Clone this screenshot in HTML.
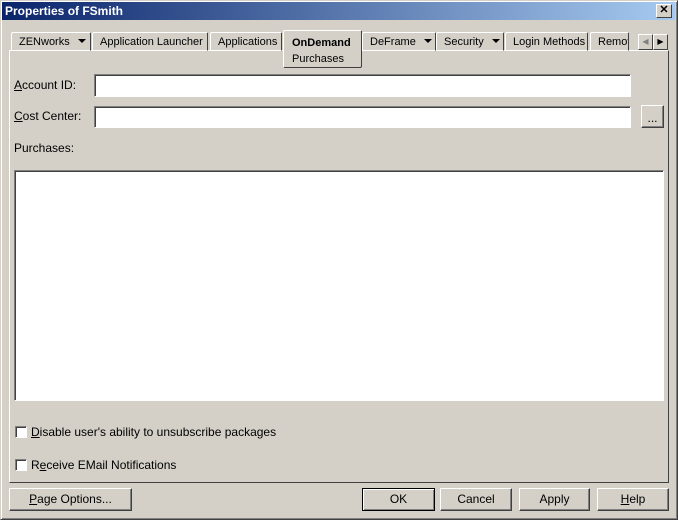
<!DOCTYPE html><html><head><style>
*{margin:0;padding:0;box-sizing:border-box}
body{width:678px;height:520px;background:#d4d0c8;font:12px "Liberation Sans",sans-serif;color:#000;position:relative;overflow:hidden}
.a{position:absolute}
.frame{left:0;top:0;width:678px;height:520px;border:1px solid;border-color:#d4d0c8 #404040 #404040 #d4d0c8;box-shadow:inset 1px 1px 0 #fff,inset -1px -1px 0 #808080}
.title{left:2px;top:2px;width:673px;height:18px;background:linear-gradient(90deg,#0a246a,#a6caf0);color:#fff;font-weight:bold;font-size:12px;padding:2px 0 0 3px}
.x{left:656px;top:4px;width:16px;height:14px;background:#d4d0c8;border:1px solid;border-color:#fff #404040 #404040 #fff;font:bold 11px "Liberation Sans";text-align:center;line-height:11px;color:#000}
.tab{top:32px;height:19px;border:1px solid;border-color:#fff #404040 transparent #fff;border-radius:2px 2px 0 0;padding:3px 0 0 7px;white-space:nowrap;overflow:hidden;font-size:11px}
.tri{display:inline-block;width:0;height:0;border-left:4px solid transparent;border-right:4px solid transparent;border-top:4px solid #000;margin-left:8px;vertical-align:2px}
.panel{left:9px;top:50px;width:660px;height:433px;border:1px solid;border-color:#fff #404040 #404040 #fff}
.inp{background:#fff;border:1px solid;border-color:#808080 #fff #fff #808080;box-shadow:inset 1px 1px 0 #404040}
.btn{border:1px solid;border-color:#fff #404040 #404040 #fff;box-shadow:inset -1px -1px 0 #808080;text-align:center;line-height:21px;font-size:12px}
.cb{width:12px;height:12px;background:#fff;border:1px solid;border-color:#808080 #fff #fff #808080;box-shadow:inset 1px 1px 0 #404040}
u{text-decoration:underline}
</style></head><body>
<div class="a frame"></div>
<div class="a title">Properties of FSmith</div>
<div class="a x">✕</div>
<div class="a panel"></div>
<div class="a tab" style="left:11px;width:80px">ZENworks<span class="tri"></span></div>
<div class="a tab" style="left:92px;width:116px">Application Launcher</div>
<div class="a tab" style="left:210px;width:72px">Applications</div>
<div class="a tab" style="left:362px;width:74px">DeFrame<span class="tri"></span></div>
<div class="a tab" style="left:436px;width:68px">Security<span class="tri"></span></div>
<div class="a tab" style="left:505px;width:83px">Login Methods</div>
<div class="a tab" style="left:590px;width:39px">Remote</div>
<div class="a" style="left:283px;top:30px;width:79px;height:38px;background:#d4d0c8;border:1px solid;border-color:#fff #404040 #404040 #fff;border-radius:2px;padding:4px 0 0 8px;font-size:11px;line-height:16px"><b>OnDemand</b><br>Purchases</div>
<div class="a" style="left:638px;top:34px;width:15px;height:16px;border:1px solid;border-color:#fff #404040 #404040 #fff;font-size:8px;color:#808080;text-align:center;line-height:14px">◀</div>
<div class="a" style="left:653px;top:34px;width:15px;height:16px;border:1px solid;border-color:#fff #404040 #404040 #fff;font-size:8px;text-align:center;line-height:14px">▶</div>
<div class="a" style="left:14px;top:78px"><u>A</u>ccount ID:</div>
<div class="a inp" style="left:94px;top:74px;width:537px;height:23px"></div>
<div class="a" style="left:14px;top:109px"><u>C</u>ost Center:</div>
<div class="a inp" style="left:94px;top:106px;width:537px;height:22px"></div>
<div class="a btn" style="left:641px;top:105px;width:23px;height:23px;line-height:24px">...</div>
<div class="a" style="left:14px;top:141px">Purchases:</div>
<div class="a inp" style="left:14px;top:170px;width:650px;height:231px"></div>
<div class="a cb" style="left:15px;top:426px"></div>
<div class="a" style="left:31px;top:425px"><u>D</u>isable user's ability to unsubscribe packages</div>
<div class="a cb" style="left:15px;top:459px"></div>
<div class="a" style="left:31px;top:458px">R<u>e</u>ceive EMail Notifications</div>
<div class="a btn" style="left:9px;top:488px;width:123px;height:23px"><u>P</u>age Options...</div>
<div class="a btn" style="left:362px;top:488px;width:73px;height:23px;border-color:#000;box-shadow:inset 1px 1px 0 #fff,inset -1px -1px 0 #808080">OK</div>
<div class="a btn" style="left:440px;top:488px;width:72px;height:23px">Cancel</div>
<div class="a btn" style="left:519px;top:488px;width:71px;height:23px">Apply</div>
<div class="a btn" style="left:597px;top:488px;width:72px;height:23px"><u>H</u>elp</div>
</body></html>
